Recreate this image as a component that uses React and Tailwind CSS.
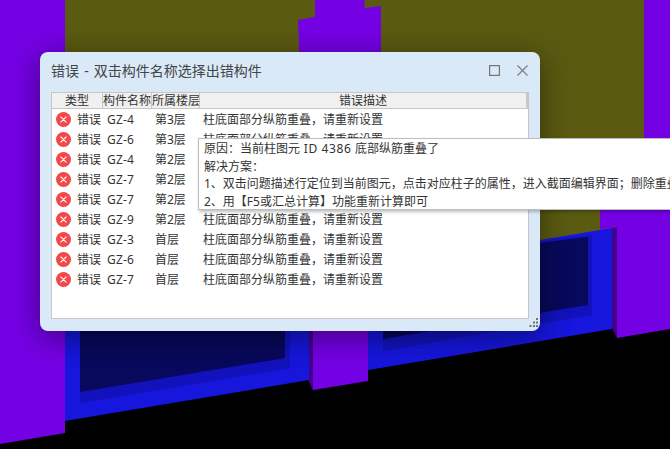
import React from 'react';

const FONT = "font-['Noto_Sans','Noto_Sans_CJK_SC',sans-serif]";

const ROWS = [
  ['GZ-4', '第3层'],
  ['GZ-6', '第3层'],
  ['GZ-4', '第2层'],
  ['GZ-7', '第2层'],
  ['GZ-7', '第2层'],
  ['GZ-9', '第2层'],
  ['GZ-3', '首层'],
  ['GZ-6', '首层'],
  ['GZ-7', '首层'],
];

const COLS = 'grid grid-cols-[51px_49px_48px_1fr]';

// 3D model behind the dialog
const Scene = () => (
  <svg className="absolute inset-0" width="670" height="449" viewBox="0 0 670 449">
    <rect width="670" height="449" fill="#000" />
    <rect x="65" y="0" width="579" height="250" fill="#5b5a11" />
    {/* wall frame */}
    <polygon points="65,330 540,240 612,228 612,329 65,421" fill="#1616dc" />
    {/* first window */}
    <polygon points="80,320 290,320 290,368 80,403" fill="#1212bc" />
    <polygon points="80,320 285,320 285,358 80,392" fill="#08085c" />
    {/* second window */}
    <polygon points="383,260 592,235 592,315 383,351" fill="#1212bc" />
    <polygon points="383,262 588,237 588,305 383,339" fill="#08085c" />
    {/* columns */}
    <polygon points="0,0 65,0 65,433 0,444" fill="#7400e4" />
    <polygon points="298,20 315,17 315,0 364.5,0 364.5,8 381,6 381,60 368,330 368,381 313,390 309,381 309,330" fill="#7400e4" />
    <polygon points="309,320 313,320 313,390 309,381" fill="#44008c" />
    <polygon points="644,0 670,0 670,140 644,140" fill="#7400e4" />
    <polygon points="600,205 670,205 670,329 617,338 617,227 600,230" fill="#7400e4" />
    <polygon points="612,228 617,227 617,338 612,328" fill="#44008c" />
  </svg>
);

const ErrorIcon = () => (
  <svg width="15" height="15" viewBox="0 0 15 15" className="shrink-0 -mt-[2px]">
    <circle cx="7.5" cy="7.5" r="7.5" fill="#f24848" />
    <path d="M4.8 4.8l5.4 5.4M10.2 4.8l-5.4 5.4" stroke="#fff" strokeWidth="1.1" strokeLinecap="round" />
  </svg>
);

const Grip = () => (
  <svg className="absolute right-[1px] bottom-[3px]" width="10" height="10" viewBox="0 0 10 10" fill="#6d7278">
    <rect x="7" y="0" width="2" height="2" />
    <rect x="4" y="3.5" width="2" height="2" />
    <rect x="7" y="3.5" width="2" height="2" />
    <rect x="0.5" y="7" width="2" height="2" />
    <rect x="4" y="7" width="2" height="2" />
    <rect x="7" y="7" width="2" height="2" />
  </svg>
);

const App = () => {
  return (
    <div className={`relative w-[670px] h-[449px] overflow-hidden bg-black ${FONT}`}>
      <Scene />

      {/* Dialog */}
      <div className="absolute left-[40px] top-[52px] w-[500px] h-[279px] flex flex-col px-[11px] pb-[12px] bg-[#d9e9f8] rounded-[8px] shadow-[0_6px_30px_rgba(0,0,0,0.45)]">
        <div className="h-[40px] shrink-0 flex items-center justify-between pb-[4px]">
          <span className="text-[14px] text-[#444]">错误<span className="mx-[1.5px]"> - </span>双击构件名称选择出错构件</span>
          <div className="flex items-center gap-[17px] pr-[1px]">
            <svg width="11" height="11" viewBox="0 0 11 11" fill="none" stroke="#747474" strokeWidth="1.2">
              <rect x="0.6" y="0.6" width="9.8" height="9.8" />
            </svg>
            <svg width="11" height="11" viewBox="0 0 11 11" fill="none" stroke="#7c7c7c" strokeWidth="1.1">
              <path d="M0.5 0.5l10 10M10.5 0.5l-10 10" />
            </svg>
          </div>
        </div>

        <div className="flex-1 flex flex-col bg-white border border-[#c6c6c6] text-[12px] leading-[20px] text-[#333]">
          <div className={`${COLS} h-[16px] shrink-0 bg-[#f0f0f0] border-b border-[#c6c6c6] leading-[15px] text-center whitespace-nowrap`}>
            <div className="border-r border-[#c8c8c8]">类型</div>
            <div className="border-r border-[#c8c8c8]">构件名称</div>
            <div className="border-r border-[#c8c8c8]">所属楼层</div>
            <div className="border-r-2 border-[#c8c8c8]">错误描述</div>
          </div>
          <div className="pt-[1px]">
            {ROWS.map((r, i) => (
              <div key={i} className={`${COLS} h-[20px]`}>
                <div className="flex items-center gap-[6px] pl-[4px]">
                  <ErrorIcon />
                  <span>错误</span>
                </div>
                <div className="pl-[4px] tracking-[0.2px]">{r[0]}</div>
                <div className="pl-[3px]">{r[1]}</div>
                <div className="pl-[3px]">柱底面部分纵筋重叠，请重新设置</div>
              </div>
            ))}
          </div>
        </div>
        <Grip />
      </div>

      {/* Tooltip */}
      <div className="absolute left-[198px] top-[138px] w-[640px] h-[72px] pl-[5px] pt-[1px] bg-white border border-[#bdbdbd] shadow-[1px_2px_3px_rgba(0,0,0,0.25)] text-[12px] leading-[17.5px] text-[#333] whitespace-nowrap">
        <div>原因：当前柱图元<span className="tracking-[0.6px]"> ID 4386 </span>底部纵筋重叠了</div>
        <div>解决方案：</div>
        <div>1、双击问题描述行定位到当前图元，点击对应柱子的属性，进入截面编辑界面；删除重叠的纵筋</div>
        <div>2、用【F5或汇总计算】功能重新计算即可</div>
      </div>
    </div>
  );
};

export default App;
